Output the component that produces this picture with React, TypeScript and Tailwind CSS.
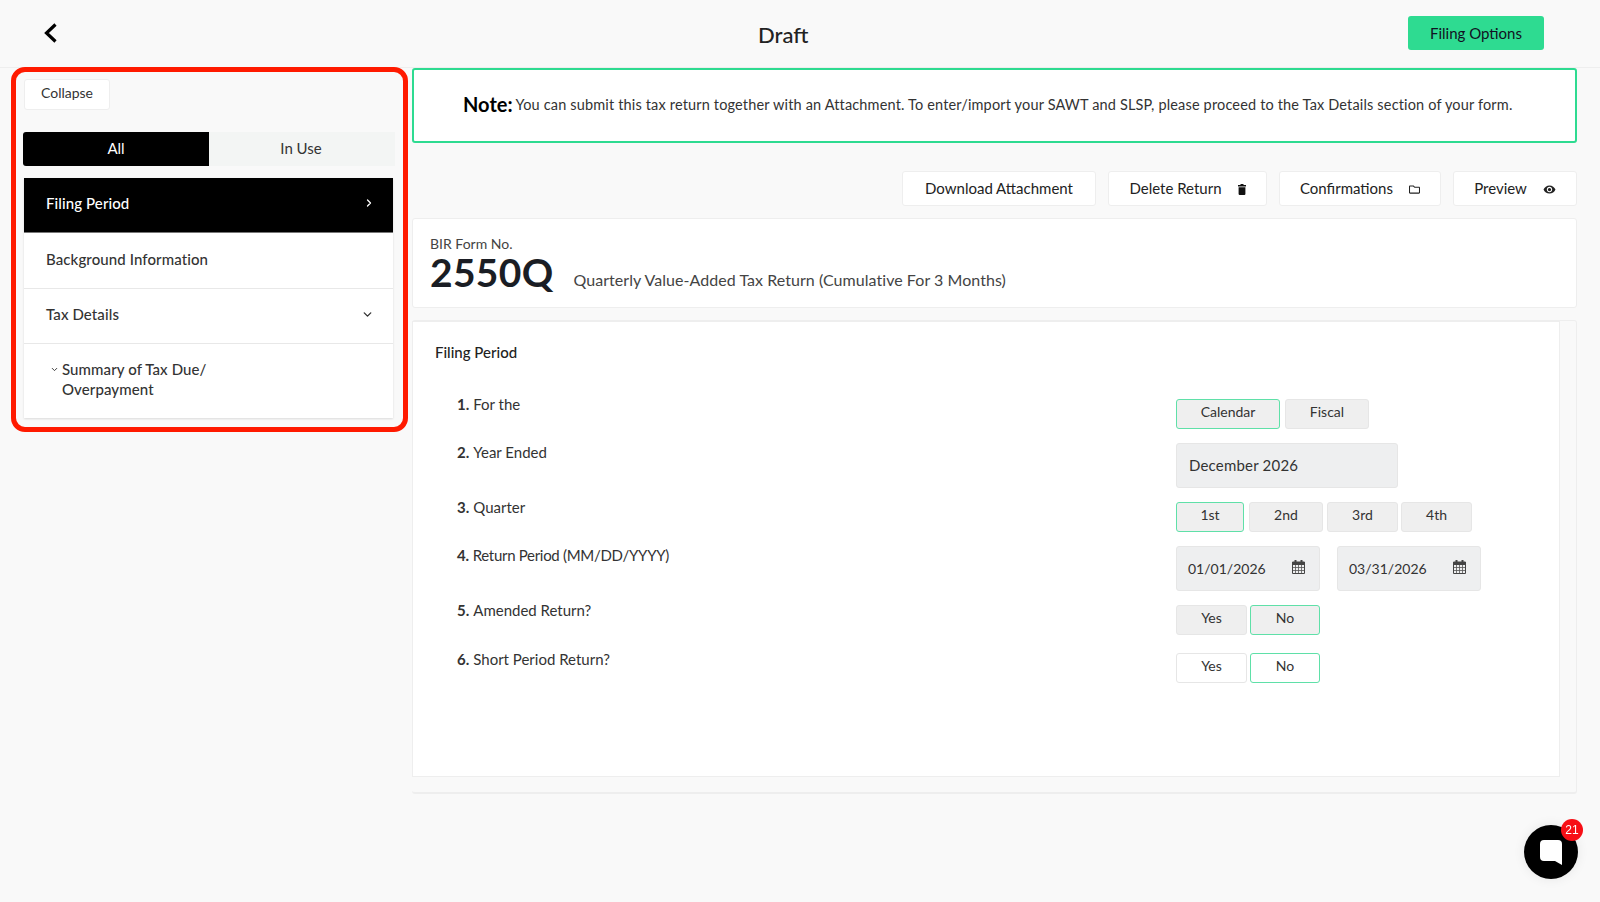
import { FaRegFolder } from "react-icons/fa";
import { MdVisibility } from "react-icons/md";
import { ChevronDown, ChevronRight } from "lucide-react";
import type { ReactNode } from "react";

const selectedBtn = "border-[#5fe0a8]";

function CalendarIcon() {
  return (
    <svg width="13" height="14" viewBox="0 0 13 14" className="shrink-0 -mt-[2px]">
      <path d="M0.5 2 H12.5 V13.5 H0.5 Z" fill="#eeeff0" stroke="#444" strokeWidth="1" />
      <rect x="0.5" y="2" width="12" height="3" fill="#444" />
      <rect x="2.5" y="0" width="2" height="3" fill="#444" />
      <rect x="8.5" y="0" width="2" height="3" fill="#444" />
      <path d="M3.5 5 V13 M6.5 5 V13 M9.5 5 V13 M1 7.5 H12 M1 10.5 H12" stroke="#555" strokeWidth="0.8" />
    </svg>
  );
}

function TrashIcon() {
  return (
    <svg width="8" height="11" viewBox="0 0 8 11" className="mt-[2px] shrink-0">
      <rect x="0" y="1" width="8" height="1.5" fill="#111" />
      <rect x="2.5" y="0" width="3" height="1.5" fill="#111" />
      <path d="M0.6 3.2 H7.4 V10 Q7.4 11 6.4 11 H1.6 Q0.6 11 0.6 10 Z" fill="#111" />
    </svg>
  );
}

function Toggle({
  label,
  width,
  selected,
  white,
  extra,
}: {
  label: string;
  width: string;
  selected?: boolean;
  white?: boolean;
  extra?: string;
}) {
  return (
    <div
      className={`flex items-center justify-center h-[30px] rounded-[3px] border-[1.5px] pb-[4px] text-[14px] text-[#333] ${width} ${
        white ? "bg-white" : "bg-[#efefef]"
      } ${selected ? selectedBtn : "border-[#e6e6e6]"} ${extra ?? ""}`}
    >
      {label}
    </div>
  );
}

function ActionButton({ label, width, icon }: { label: string; width: string; icon?: ReactNode }) {
  return (
    <div
      className={`flex items-center justify-center gap-[16px] h-[35px] bg-white border border-[#eeeeee] rounded-[3px] text-[15px] text-[#222] ${width}`}
    >
      <span>{label}</span>
      {icon}
    </div>
  );
}

function Row({
  num,
  label,
  labelPad,
  mt,
  children,
}: {
  num: string;
  label: string;
  labelPad: string;
  mt: string;
  children: ReactNode;
}) {
  return (
    <div className={`flex ${mt}`}>
      <div className={`w-[719px] ml-[44px] text-[15px] text-[#333] ${labelPad}`}>
        <span className="font-bold mr-[4px]">{num}.</span>
        {label}
      </div>
      <div className="flex">{children}</div>
    </div>
  );
}

function DateBox({ value, extra }: { value: string; extra?: string }) {
  return (
    <div
      className={`flex items-center justify-between w-[144px] h-[45px] bg-[#eeeff0] border-[1.5px] border-[#e6e6e6] rounded-[3px] pl-[11px] pr-[14px] text-[14px] text-[#333] ${extra ?? ""}`}
    >
      {value}
      <CalendarIcon />
    </div>
  );
}

function MenuItem({
  label,
  height,
  active,
  icon,
}: {
  label: string;
  height: string;
  active?: boolean;
  icon?: ReactNode;
}) {
  return (
    <div
      className={`flex items-center justify-between pl-[22px] pr-[20px] pb-[3px] text-[15px] font-medium tracking-[0.1px] border-b ${height} ${
        active ? "bg-black text-white border-[#777]" : "bg-white text-[#333] border-[#e8e8e8]"
      }`}
    >
      {label}
      {icon}
    </div>
  );
}

export default function App() {
  return (
    <div className="min-h-[902px] bg-[#f9f9f9] font-['Lato','Liberation_Sans',sans-serif] overflow-hidden">
      <header className="flex items-center h-[68px] border-b border-[#eeeeee] pl-[42px] pr-[56px]">
        <svg width="18" height="24" viewBox="0 0 18 24" fill="none" className="-mt-[1px]">
          <path d="M13.5 3.5 L4.5 12 L13.5 20.5" stroke="#000" strokeWidth="3.2" />
        </svg>
        <h1 className="ml-[698px] mt-[2px] text-[22px] font-medium text-[#222]">Draft</h1>
        <div className="flex items-center justify-center ml-auto w-[136px] h-[34px] -mt-[1px] bg-[#2edb91] rounded-[3px] text-[15px] text-[#112]">
          Filing Options
        </div>
      </header>

      <div className="flex items-start">
        <aside className="ml-[11px] -mt-[1px] w-[397px] h-[365px] shrink-0 border-[5px] border-[#ff1a00] rounded-[14px] pl-[7px] pr-[8px] pt-[7px]">
          <div className="flex items-center justify-center ml-[1px] w-[86px] h-[31px] bg-white border border-[#eeeeee] rounded-[3px] pb-[5px] text-[14px] text-[#333]">
            Collapse
          </div>
          <div className="flex mt-[22px] h-[34px] text-[15px]">
            <div className="flex w-[186px] items-center justify-center bg-black text-white rounded-l-[3px] pb-[1px]">All</div>
            <div className="flex flex-1 items-center justify-center bg-[#f3f5f4] text-[#333] pb-[1px] pr-[2px]">In Use</div>
          </div>
          <div className="mt-[12px] ml-[1px] mr-[2px] shadow-[0_1px_2px_rgba(0,0,0,0.12)]">
            <MenuItem
              label="Filing Period"
              height="h-[55px]"
              active
              icon={<ChevronRight size={12} strokeWidth={2.5} className="-mt-[1px] -mr-[2px]" />}
            />
            <MenuItem label="Background Information" height="h-[56px]" />
            <MenuItem
              label="Tax Details"
              height="h-[55px]"
              icon={<ChevronDown size={13} strokeWidth={2.5} className="-mt-[1px] -mr-[1px]" />}
            />
            <div className="flex bg-white h-[74px] pl-[26px] pt-[15px] text-[15px] font-medium tracking-[0.1px] leading-[20px] text-[#333]">
              <ChevronDown size={9} strokeWidth={2.5} className="mt-[6px] mr-[3px] shrink-0" />
              <span>
                Summary of Tax Due/
                <br />
                Overpayment
              </span>
            </div>
          </div>
        </aside>

        <main className="ml-[4px] w-[1165px] shrink-0">
          <div className="flex items-center h-[75px] pl-[49px] pb-[3px] bg-white border-2 border-[#2edb91] rounded-[3px] text-[#333]">
            <span className="text-[20px] font-bold text-black mr-[3px]">Note:</span>
            <span className="text-[14.5px] tracking-[0.16px] mt-[2px]">
              You can submit this tax return together with an Attachment. To enter/import your SAWT and SLSP, please
              proceed to the Tax Details section of your form.
            </span>
          </div>

          <div className="flex justify-end gap-[12px] mt-[28px]">
            <ActionButton label="Download Attachment" width="w-[194px]" />
            <ActionButton label="Delete Return" width="w-[159px]" icon={<TrashIcon />} />
            <ActionButton label="Confirmations" width="w-[162px]" icon={<FaRegFolder className="w-[11px] h-[11px] mt-[2px]" />} />
            <ActionButton label="Preview" width="w-[124px]" icon={<MdVisibility className="w-[13px] h-[13px] mt-[2px]" />} />
          </div>

          <section className="mt-[12px] h-[90px] bg-white border border-[#eeeeee] rounded-[3px] pl-[17px] pt-[17px]">
            <div className="text-[14px] leading-[16px] text-[#444]">BIR Form No.</div>
            <div className="flex items-end">
              <span className="text-[39px] leading-[40px] font-bold text-[#1a1d24] tracking-[0.3px]">2550Q</span>
              <span className="ml-[20px] text-[16px] text-[#444] tracking-[0.05px]">
                Quarterly Value-Added Tax Return (Cumulative For 3 Months)
              </span>
            </div>
          </section>

          <section className="mt-[12px] h-[474px] bg-[#f9f9f9] border-r border-b-2 border-t border-[#eeeeee] rounded-[3px] pr-[16px] pb-[15px]">
            <div className="h-full bg-white border border-[#eeeeee] pt-[19px]">
              <h2 className="ml-[22px] text-[15px] font-medium text-[#222]">Filing Period</h2>
              <Row num="1" label="For the" labelPad="-mt-[6px]" mt="mt-[35px]">
                <Toggle label="Calendar" width="w-[104px]" selected />
                <Toggle label="Fiscal" width="w-[84px]" extra="ml-[5px]" />
              </Row>
              <Row num="2" label="Year Ended" labelPad="-mt-[2px]" mt="mt-[14px]">
                <div className="flex items-center w-[222px] h-[45px] bg-[#eeeff0] border-[1.5px] border-[#e6e6e6] rounded-[3px] pl-[12px] text-[15px] text-[#333] tracking-[0.2px]">
                  December 2026
                </div>
              </Row>
              <Row num="3" label="Quarter" labelPad="-mt-[6px]" mt="mt-[14px]">
                <Toggle label="1st" width="w-[68px]" selected />
                <Toggle label="2nd" width="w-[74px]" extra="ml-[5px]" />
                <Toggle label="3rd" width="w-[71px]" extra="ml-[4px]" />
                <Toggle label="4th" width="w-[71px]" extra="ml-[3px]" />
              </Row>
              <Row num="4" label="Return Period (MM/DD/YYYY)" labelPad="-mt-[2px] tracking-[-0.3px]" mt="mt-[14px]">
                <DateBox value="01/01/2026" />
                <DateBox value="03/31/2026" extra="ml-[17px]" />
              </Row>
              <Row num="5" label="Amended Return?" labelPad="-mt-[6px]" mt="mt-[14px]">
                <Toggle label="Yes" width="w-[71px]" />
                <Toggle label="No" width="w-[70px]" selected extra="ml-[3px]" />
              </Row>
              <Row num="6" label="Short Period Return?" labelPad="-mt-[5px]" mt="mt-[18px]">
                <Toggle label="Yes" width="w-[71px]" white />
                <Toggle label="No" width="w-[70px]" selected white extra="ml-[3px]" />
              </Row>
            </div>
          </section>
        </main>
      </div>

      <div className="fixed left-[1524px] top-[825px] flex items-center justify-center w-[54px] h-[54px] rounded-full bg-black shadow-[0_0_12px_rgba(0,0,0,0.08)]">
        <svg width="24" height="27" viewBox="0 0 24 27">
          <path d="M5 1 H19 A4 4 0 0 1 23 5 V26 L16 22 H5 A4 4 0 0 1 1 18 V5 A4 4 0 0 1 5 1 Z" fill="#fff" />
        </svg>
        <span className="absolute -top-[6px] -right-[5px] flex items-center justify-center w-[22px] h-[22px] rounded-full bg-[#f70f16] text-white text-[12px] font-['Liberation_Sans',sans-serif]">
          21
        </span>
      </div>
    </div>
  );
}
